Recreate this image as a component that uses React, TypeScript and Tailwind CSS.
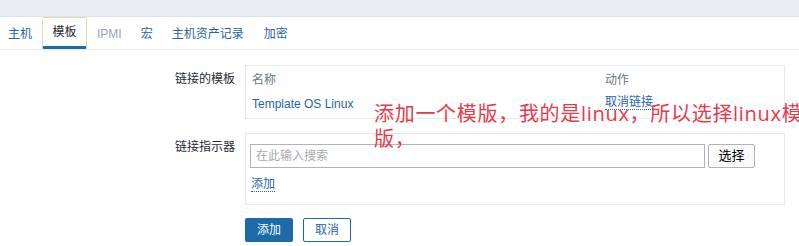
import React from "react";

const font = { fontFamily: '"Liberation Sans", Arial, "Noto Sans CJK SC", sans-serif' };

export default function App() {
  return (
    <div className="relative w-[799px] h-[246px] bg-white overflow-hidden text-[12px] text-[#1f2c33]" style={font}>
      <div className="h-[17px] bg-[#ebeef1] border-b border-[#dfe4e8]" />
      <div className="flex items-end h-[33px] border-b border-[#e6e9ec] pl-[8px]">
        <div className="h-[31px] flex items-center text-[#1f65a6] pr-[10px]">主机</div>
        <div className="h-[32px] w-[45px] flex items-center justify-center border border-[#e8d9a8] border-b-[3px] border-b-[#1b6ba8] text-[#1f2c33] rounded-[2px]">模板</div>
        <div className="h-[31px] flex items-center text-[#8fa4b8] pl-[10px] pr-[19px]">IPMI</div>
        <div className="h-[31px] flex items-center text-[#1f65a6] pr-[19px]">宏</div>
        <div className="h-[31px] flex items-center text-[#1f65a6] pr-[20px]">主机资产记录</div>
        <div className="h-[31px] flex items-center text-[#1f65a6]">加密</div>
      </div>

      <div className="flex mt-[15px]">
        <div className="w-[235px] text-right pt-[5px]">链接的模板</div>
        <div className="ml-[10px] w-[540px] h-[54px] border border-[#e6e9ec] px-[6px] pt-[5px]">
          <div className="flex text-[#6b7780]">
            <div className="w-[353px]">名称</div>
            <div>动作</div>
          </div>
          <div className="flex mt-[6px]">
            <div className="w-[353px] text-[#1f65a6]">Template OS Linux</div>
            <div className="text-[#1f65a6] border-b border-dotted border-[#1f65a6] leading-[14px] h-[15px]">取消链接</div>
          </div>
        </div>
      </div>

      <div className="flex mt-[14px]">
        <div className="w-[235px] text-right pt-[5px]">链接指示器</div>
        <div className="ml-[10px] w-[540px] h-[72px] border border-[#e6e9ec] px-[4px] pt-[10px]">
          <div className="flex gap-[3px]">
            <div className="w-[455px] h-[24px] border border-[#aeb4b8] flex items-center px-[5px] text-[#a6acb0]">在此输入搜索</div>
            <div className="w-[47px] h-[24px] border border-[#aeb4b8] rounded-[2px] flex items-center justify-center text-[13px] text-black bg-[#fbfbfb]">选择</div>
          </div>
          <div className="mt-[9px] ml-[1px] inline-block text-[#1f65a6] border-b border-dotted border-[#1f65a6] leading-[14px]">添加</div>
        </div>
      </div>

      <div className="flex gap-[10px] ml-[245px] mt-[13px]">
        <div className="w-[48px] h-[24px] bg-[#1b6ba8] text-white flex items-center justify-center rounded-[2px]">添加</div>
        <div className="w-[48px] h-[24px] border border-[#1b6ba8] text-[#1f65a6] flex items-center justify-center rounded-[2px]">取消</div>
      </div>

      <div
        className="absolute left-[374px] top-[101px] whitespace-nowrap text-[20px] leading-[25px] tracking-[0.7px] text-[#e6394a]"
        style={{ fontFamily: '"Open Sans", "Noto Sans CJK SC", sans-serif' }}
      >
        添加一个模版，我的是linux，所以选择linux模
        <br />
        版，
      </div>
    </div>
  );
}
